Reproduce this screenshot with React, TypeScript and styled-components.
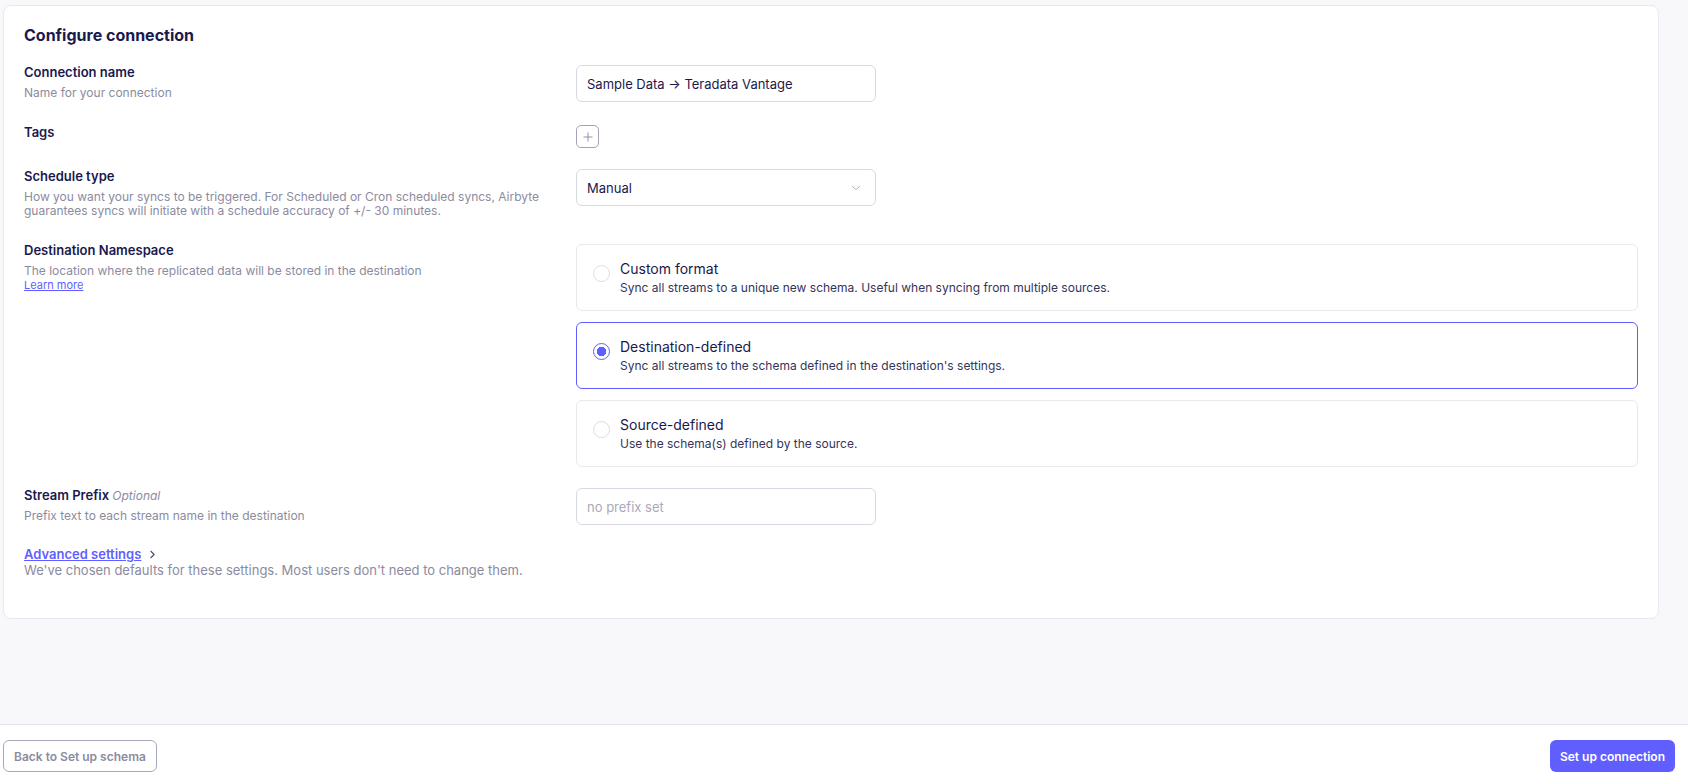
import styled, { createGlobalStyle } from 'styled-components'
import { ChevronDown, ChevronRight, Plus } from 'lucide-react'

interface INamespaceOption {
  id: string,
  title: string,
  description: string
}

const namespaceOptions: INamespaceOption[] = [
  { id: "custom", title: "Custom format", description: "Sync all streams to a unique new schema. Useful when syncing from multiple sources." },
  { id: "destination", title: "Destination-defined", description: "Sync all streams to the schema defined in the destination's settings." },
  { id: "source", title: "Source-defined", description: "Use the schema(s) defined by the source." },
]

function App() {
  const selected = "destination"
  return (
    <>
      <GlobalStyle />
      <Page>
        <Main>
          <Card>
            <Title>Configure connection</Title>
            <Row>
              <LabelCol>
                <Label>Connection name</Label>
                <Description>Name for your connection</Description>
              </LabelCol>
              <Control>
                <TextInput>Sample Data → Teradata Vantage</TextInput>
              </Control>
            </Row>
            <Row>
              <LabelCol>
                <Label>Tags</Label>
              </LabelCol>
              <Control>
                <AddTagButton>
                  <Plus size={14} strokeWidth={1.6} />
                </AddTagButton>
              </Control>
            </Row>
            <Row>
              <LabelCol>
                <Label>Schedule type</Label>
                <Description>
                  How you want your syncs to be triggered. For Scheduled or Cron scheduled syncs, Airbyte guarantees syncs will initiate with a schedule accuracy of +/- 30 minutes.
                </Description>
              </LabelCol>
              <Control>
                <Select>
                  <span>Manual</span>
                  <ChevronDown size={14} color="#a3a3b8" strokeWidth={1.6} />
                </Select>
              </Control>
            </Row>
            <Row>
              <LabelCol>
                <Label>Destination Namespace</Label>
                <Description>The location where the replicated data will be stored in the destination</Description>
                <LearnMore>Learn more</LearnMore>
              </LabelCol>
              <Control>
                <RadioList>
                  {namespaceOptions.map(item => (
                    <RadioCard key={item.id} $active={item.id === selected}>
                      <RadioCircle $active={item.id === selected} />
                      <div>
                        <RadioTitle>{item.title}</RadioTitle>
                        <RadioText>{item.description}</RadioText>
                      </div>
                    </RadioCard>
                  ))}
                </RadioList>
              </Control>
            </Row>
            <Row>
              <LabelCol>
                <Label>Stream Prefix <Optional>Optional</Optional></Label>
                <Description>Prefix text to each stream name in the destination</Description>
              </LabelCol>
              <Control>
                <TextInput $placeholder>no prefix set</TextInput>
              </Control>
            </Row>
            <Advanced>
              <AdvancedLink>
                <span>Advanced settings</span>
                <ChevronRight size={13} color="#4b4a6e" strokeWidth={2} />
              </AdvancedLink>
              <AdvancedText>We've chosen defaults for these settings. Most users don't need to change them.</AdvancedText>
            </Advanced>
          </Card>
        </Main>
        <Footer>
          <SecondaryButton>Back to Set up schema</SecondaryButton>
          <PrimaryButton>Set up connection</PrimaryButton>
        </Footer>
      </Page>
    </>
  )
}

const GlobalStyle = createGlobalStyle`
  * { box-sizing: border-box; }
  body {
    margin: 0;
    font-family: Inter, "Noto Sans", sans-serif;
    background: #f8f8fa;
    color: #1a194d;
  }
`

const Page = styled.div`
  height: 784px;
  display: flex;
  flex-direction: column;
`

const Main = styled.main`
  flex: 1;
  padding: 5px 29px 0 3px;
`

const Card = styled.section`
  background: #ffffff;
  border: 1px solid #e8e8ef;
  border-radius: 8px;
  padding: 20px 20px 40px;
  display: flex;
  flex-direction: column;
  gap: 20px;
`

const Title = styled.h2`
  margin: 0;
  font-size: 16px;
  line-height: 18px;
  font-weight: 700;
  color: #1a194d;
`

const Row = styled.div`
  display: grid;
  grid-template-columns: 540px 1fr;
  column-gap: 12px;
  align-items: start;
`

const LabelCol = styled.div`
  display: flex;
  flex-direction: column;
  padding-bottom: 4px;
`

const Label = styled.div`
  font-size: 13px;
  line-height: 17px;
  font-weight: 600;
  color: #1a194d;
`

const Optional = styled.i`
  font-size: 12px;
  font-weight: 400;
  color: #8b8ba0;
`

const Description = styled.div`
  margin-top: 5px;
  font-size: 12px;
  line-height: 14px;
  color: #8b8ba0;
`

const LearnMore = styled.a`
  font-size: 11px;
  line-height: 14px;
  color: #615eff;
  text-decoration: underline;
  width: fit-content;
`

const Control = styled.div`
  padding-top: 1px;
`

const TextInput = styled.div<{ $placeholder?: boolean }>`
  width: 300px;
  height: 37px;
  border: 1px solid #d9d9e3;
  border-radius: 6px;
  padding: 0 10px;
  display: flex;
  align-items: center;
  font-size: 13px;
  color: ${props => props.$placeholder ? '#a9a9bc' : '#1a194d'};
`

const Select = styled(TextInput)`
  justify-content: space-between;
  padding-right: 12px;
`

const AddTagButton = styled.button`
  width: 23px;
  height: 23px;
  padding: 0;
  border: 1px solid #a3a2b8;
  border-radius: 5px;
  background: #ffffff;
  color: #8b8ba0;
  display: flex;
  align-items: center;
  justify-content: center;
`

const RadioList = styled.div`
  margin-top: 1px;
  display: flex;
  flex-direction: column;
  gap: 11px;
`

const RadioCard = styled.label<{ $active: boolean }>`
  height: 67px;
  display: flex;
  align-items: flex-start;
  gap: 10px;
  padding: 15px 16px;
  border: 1px solid ${props => props.$active ? '#615eff' : '#e8e8ef'};
  border-radius: 6px;
  background: #ffffff;
`

const RadioCircle = styled.span<{ $active: boolean }>`
  flex: none;
  width: 17px;
  height: 17px;
  margin-top: 5px;
  border-radius: 50%;
  border: 1px solid ${props => props.$active ? '#615eff' : '#dcdce5'};
  background: ${props => props.$active ? 'radial-gradient(circle, #615eff 0 4.5px, #ffffff 5px)' : '#ffffff'};
`

const RadioTitle = styled.div`
  font-size: 14px;
  line-height: 18px;
  color: #1a194d;
`

const RadioText = styled.div`
  margin-top: 3px;
  font-size: 12px;
  line-height: 14px;
  color: #35345a;
`

const Advanced = styled.div`
  display: flex;
  flex-direction: column;
`

const AdvancedLink = styled.a`
  display: flex;
  align-items: center;
  gap: 5px;
  font-size: 13px;
  line-height: 15px;
  font-weight: 600;
  color: #615eff;
  span {
    text-decoration: underline;
  }
`

const AdvancedText = styled.div`
  font-size: 13px;
  line-height: 16px;
  color: #8b8ba0;
`

const Footer = styled.footer`
  height: 60px;
  flex: none;
  background: #ffffff;
  border-top: 1px solid #e5e5ec;
  display: flex;
  justify-content: space-between;
  align-items: flex-start;
  padding: 15px 13px 0 3px;
`

const SecondaryButton = styled.button`
  height: 32px;
  padding: 0 10px;
  border: 1px solid #a9a8bb;
  border-radius: 6px;
  background: #ffffff;
  font-family: inherit;
  font-size: 12px;
  font-weight: 600;
  color: #8b8ba0;
`

const PrimaryButton = styled.button`
  height: 32px;
  padding: 0 10px;
  border: none;
  border-radius: 6px;
  background: #615eff;
  font-family: inherit;
  font-size: 12px;
  font-weight: 600;
  color: #ffffff;
`

export default App
